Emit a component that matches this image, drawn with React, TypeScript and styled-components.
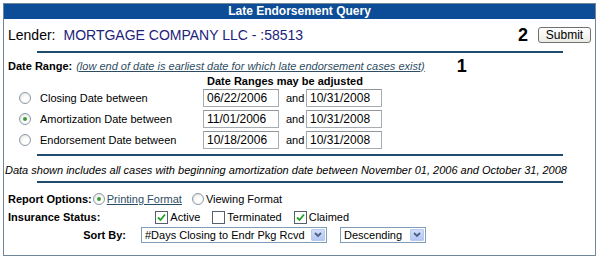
import React from "react";
import styled, { createGlobalStyle } from "styled-components";

const GlobalStyle = createGlobalStyle`
  body {
    margin: 0;
    background: #ffffff;
    font-family: "Liberation Sans", Arial, sans-serif;
    color: #000000;
  }
`;

const Panel = styled.div`
  box-sizing: border-box;
  margin: 3px 0 0 3px;
  width: 593px;
  height: 253px;
  border: 1px solid #6f8799;
  display: flex;
  flex-direction: column;
`;

const Header = styled.div`
  height: 15px;
  background: #0d4c96;
  color: #ffffff;
  font-size: 12px;
  font-weight: bold;
  line-height: 15px;
  text-align: center;
`;

const LenderRow = styled.div`
  height: 32px;
  display: flex;
  align-items: center;
  padding: 0 4px;
`;

const LenderLabel = styled.span`
  font-size: 14px;
`;

const LenderName = styled.span`
  font-size: 14px;
  color: #22227a;
  margin-left: 8px;
`;

const Marker = styled.span`
  font-size: 18px;
  font-weight: bold;
  line-height: 18px;
`;

const RightGroup = styled.div`
  margin-left: auto;
  display: flex;
  align-items: center;
  gap: 10px;
`;

const Button = styled.button`
  box-sizing: border-box;
  width: 53px;
  height: 16px;
  padding: 0;
  border: 1px solid #707070;
  border-radius: 3px;
  background: linear-gradient(#ffffff, #ecebe6);
  font-family: "Liberation Sans", Arial, sans-serif;
  font-size: 12px;
  line-height: 14px;
  color: #000000;
`;

const Rule = styled.div<{ $top: number }>`
  height: 2px;
  margin: ${(p) => p.$top}px 32px 0 33px;
  background: #1f4b6e;
`;

const DateRangeRow = styled.div`
  height: 21px;
  margin-top: 2px;
  display: flex;
  align-items: center;
  padding-left: 4px;
  font-size: 11px;
`;

const Bold = styled.span`
  font-weight: bold;
  font-size: 11px;
  white-space: nowrap;
`;

const Hint = styled.a`
  margin-left: 4px;
  font-style: italic;
  color: #2e4d63;
  text-decoration: underline;
`;

const HintMarker = styled(Marker)`
  margin-left: 32px;
`;

const Caption = styled.div`
  height: 11px;
  line-height: 11px;
  padding-left: 203px;
  font-size: 11px;
  font-weight: bold;
`;

const DateRows = styled.div`
  margin-top: 2px;
  display: flex;
  flex-direction: column;
  gap: 3px;
`;

const DateRow = styled.div`
  height: 18px;
  display: flex;
  align-items: center;
  padding-left: 15px;
  font-size: 11px;
`;

const Radio = styled.span<{ $checked?: boolean }>`
  box-sizing: border-box;
  width: 12px;
  height: 12px;
  border-radius: 50%;
  border: 1px solid #8c99a6;
  background: radial-gradient(circle at 60% 65%, #ffffff 30%, #dcdcd6 100%);
  display: inline-flex;
  align-items: center;
  justify-content: center;
  flex-shrink: 0;

  &::after {
    content: "";
    width: 4px;
    height: 4px;
    border-radius: 50%;
    background: ${(p) => (p.$checked ? "#3b9b3b" : "transparent")};
  }
`;

const RowLabel = styled.span`
  width: 163px;
  margin-left: 9px;
`;

const DateInput = styled.div`
  box-sizing: border-box;
  width: 76px;
  height: 18px;
  border: 1px solid #a5acb2;
  border-top-color: #8e959b;
  padding-left: 3px;
  font-size: 12px;
  line-height: 16px;
  background: #ffffff;
`;

const And = styled.span`
  width: 20px;
  margin: 0 0 0 7px;
`;

const Summary = styled.div`
  margin-top: 7px;
  height: 14px;
  line-height: 14px;
  padding-left: 1px;
  font-size: 11px;
  font-style: italic;
`;

const OptionRow = styled.div<{ $top: number }>`
  height: 16px;
  margin-top: ${(p) => p.$top}px;
  display: flex;
  align-items: center;
  padding-left: 4px;
  font-size: 11px;
`;

const OptionLink = styled.a`
  margin-left: 2px;
  color: #2e4d63;
  text-decoration: underline;
`;

const OptionText = styled.span`
  margin-left: 2px;
`;

const RadioSpacer = styled.span<{ $width: number }>`
  width: ${(p) => p.$width}px;
`;

const Checks = styled.div`
  margin-left: 55px;
  display: flex;
  align-items: center;
`;

const Check = styled.label<{ $gap: number }>`
  display: flex;
  align-items: center;
  margin-right: ${(p) => p.$gap}px;
`;

const Box = styled.span`
  box-sizing: border-box;
  width: 13px;
  height: 13px;
  border: 1px solid #55606a;
  background: #ffffff;
  display: inline-flex;
  align-items: center;
  justify-content: center;
  margin-right: 2px;
`;

const SortLabel = styled(Bold)`
  width: 118px;
  text-align: right;
`;

const Select = styled.div<{ $width: number; $left: number }>`
  box-sizing: border-box;
  width: ${(p) => p.$width}px;
  height: 16px;
  margin-left: ${(p) => p.$left}px;
  border: 1px solid #7f9db9;
  display: flex;
  align-items: center;
  justify-content: space-between;
  padding: 0 1px 0 3px;
  font-size: 11px;
  white-space: nowrap;
  background: #ffffff;
`;

const SelectArrow = styled.span`
  box-sizing: border-box;
  width: 14px;
  height: 12px;
  border: 1px solid #b6c9ef;
  border-radius: 1px;
  background: linear-gradient(#d2defb, #b3c7f3);
  display: inline-flex;
  align-items: center;
  justify-content: center;
  flex-shrink: 0;
`;

const CheckMark = () => (
  <svg width="9" height="9" viewBox="0 0 9 9">
    <path d="M1 4.5 L3.5 7 L8 1.5" fill="none" stroke="#22a022" strokeWidth="1.8" />
  </svg>
);

const Arrow = () => (
  <SelectArrow>
    <svg width="8" height="6" viewBox="0 0 8 6">
      <path d="M1 1 L4 4 L7 1" fill="none" stroke="#4d6185" strokeWidth="1.8" />
    </svg>
  </SelectArrow>
);

const dateRows = [
  { label: "Closing Date between", from: "06/22/2006", to: "10/31/2008", checked: false },
  { label: "Amortization Date between", from: "11/01/2006", to: "10/31/2008", checked: true },
  { label: "Endorsement Date between", from: "10/18/2006", to: "10/31/2008", checked: false },
];

const statuses = [
  { label: "Active", checked: true, gap: 12 },
  { label: "Terminated", checked: false, gap: 12 },
  { label: "Claimed", checked: true, gap: 0 },
];

const App: React.FC = () => {
  return (
    <>
      <GlobalStyle />
      <Panel>
        <Header>Late Endorsement Query</Header>
        <LenderRow>
          <LenderLabel>Lender:</LenderLabel>
          <LenderName>MORTGAGE COMPANY LLC - :58513</LenderName>
          <RightGroup>
            <Marker>2</Marker>
            <Button>Submit</Button>
          </RightGroup>
        </LenderRow>
        <Rule $top={0} />
        <DateRangeRow>
          <Bold>Date Range:</Bold>
          <Hint>(low end of date is earliest date for which late endorsement cases exist)</Hint>
          <HintMarker>1</HintMarker>
        </DateRangeRow>
        <Caption>Date Ranges may be adjusted</Caption>
        <DateRows>
          {dateRows.map((r) => (
            <DateRow key={r.label}>
              <Radio $checked={r.checked} />
              <RowLabel>{r.label}</RowLabel>
              <DateInput>{r.from}</DateInput>
              <And>and</And>
              <DateInput>{r.to}</DateInput>
            </DateRow>
          ))}
        </DateRows>
        <Rule $top={5} />
        <Summary>
          Data shown includes all cases with beginning amortization date between November 01, 2006 and
          October 31, 2008
        </Summary>
        <Rule $top={4} />
        <OptionRow $top={8}>
          <Bold>Report Options:</Bold>
          <RadioSpacer $width={1} />
          <Radio $checked />
          <OptionLink>Printing Format</OptionLink>
          <RadioSpacer $width={10} />
          <Radio />
          <OptionText>Viewing Format</OptionText>
        </OptionRow>
        <OptionRow $top={2}>
          <Bold>Insurance Status:</Bold>
          <Checks>
            {statuses.map((s) => (
              <Check key={s.label} $gap={s.gap}>
                <Box>{s.checked && <CheckMark />}</Box>
                {s.label}
              </Check>
            ))}
          </Checks>
        </OptionRow>
        <OptionRow $top={2}>
          <SortLabel>Sort By:</SortLabel>
          <Select $width={186} $left={15}>
            #Days Closing to Endr Pkg Rcvd
            <Arrow />
          </Select>
          <Select $width={86} $left={13}>
            Descending
            <Arrow />
          </Select>
        </OptionRow>
      </Panel>
    </>
  );
};

export default App;
